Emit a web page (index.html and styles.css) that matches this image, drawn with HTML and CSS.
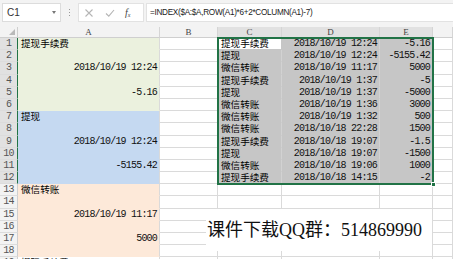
FILE: index.html
```html
<!DOCTYPE html>
<html lang="zh">
<head>
<meta charset="utf-8">
<link rel="stylesheet" href="styles.css">
</head>
<body>
<div class="app">
  <div class="toolbar">
    <div class="namebox"><span class="nb-text">C1</span><span class="nb-arrow"></span></div>
    <div class="grip"><i></i><i></i><i></i></div>
    <div class="fxbox">
      <svg class="ico" width="12" height="12" viewBox="0 0 12 12"><path d="M2.5 2.5 L9.5 9.5 M9.5 2.5 L2.5 9.5" stroke="#b5b5b5" stroke-width="1.1" fill="none"/></svg>
      <svg class="ico" width="12" height="12" viewBox="0 0 12 12"><path d="M2 6.5 L4.8 9.2 L10 3" stroke="#b5b5b5" stroke-width="1.1" fill="none"/></svg>
      <span class="fx">f<sub>x</sub></span>
    </div>
    <div class="formula">=INDEX($A:$A,ROW(A1)*6+2*COLUMN(A1)-7)</div>
  </div>
  <div class="sheet">
    <div class="grid">
      <div class="corner"><span class="tri"></span></div>
      <div class="ch">A</div><div class="ch">B</div><div class="ch hs">C</div><div class="ch hs">D</div><div class="ch hs">E</div><div class="ch"></div>

      <div class="rh hs">1</div><div class="c g zh">提现手续费</div><div class="c"></div><div class="c act zh">提现手续费</div><div class="c s r">2018/10/19 12:24</div><div class="c s r">-5.16</div><div class="c"></div>
      <div class="rh hs">2</div><div class="c g"></div><div class="c"></div><div class="c s zh">提现</div><div class="c s r">2018/10/19 12:24</div><div class="c s r">-5155.42</div><div class="c"></div>
      <div class="rh hs">3</div><div class="c g r">2018/10/19 12:24</div><div class="c"></div><div class="c s zh">微信转账</div><div class="c s r">2018/10/19 11:17</div><div class="c s r">5000</div><div class="c"></div>
      <div class="rh hs">4</div><div class="c g"></div><div class="c"></div><div class="c s zh">提现手续费</div><div class="c s r">2018/10/19 1:37</div><div class="c s r">-5</div><div class="c"></div>
      <div class="rh hs">5</div><div class="c g r">-5.16</div><div class="c"></div><div class="c s zh">提现</div><div class="c s r">2018/10/19 1:37</div><div class="c s r">-5000</div><div class="c"></div>
      <div class="rh hs">6</div><div class="c g"></div><div class="c"></div><div class="c s zh">微信转账</div><div class="c s r">2018/10/19 1:36</div><div class="c s r">3000</div><div class="c"></div>
      <div class="rh hs">7</div><div class="c b zh">提现</div><div class="c"></div><div class="c s zh">微信转账</div><div class="c s r">2018/10/19 1:32</div><div class="c s r">500</div><div class="c"></div>
      <div class="rh hs">8</div><div class="c b"></div><div class="c"></div><div class="c s zh">微信转账</div><div class="c s r">2018/10/18 22:28</div><div class="c s r">1500</div><div class="c"></div>
      <div class="rh hs">9</div><div class="c b r">2018/10/19 12:24</div><div class="c"></div><div class="c s zh">提现手续费</div><div class="c s r">2018/10/18 19:07</div><div class="c s r">-1.5</div><div class="c"></div>
      <div class="rh hs">10</div><div class="c b"></div><div class="c"></div><div class="c s zh">提现</div><div class="c s r">2018/10/18 19:07</div><div class="c s r">-1500</div><div class="c"></div>
      <div class="rh hs">11</div><div class="c b r">-5155.42</div><div class="c"></div><div class="c s zh">微信转账</div><div class="c s r">2018/10/18 19:06</div><div class="c s r">1000</div><div class="c"></div>
      <div class="rh hs">12</div><div class="c b"></div><div class="c"></div><div class="c s zh">提现手续费</div><div class="c s r">2018/10/18 14:15</div><div class="c s r">-2</div><div class="c"></div>
      <div class="rh">13</div><div class="c p zh">微信转账</div><div class="c"></div><div class="c"></div><div class="c"></div><div class="c"></div><div class="c"></div>
      <div class="rh">14</div><div class="c p"></div><div class="c"></div><div class="c"></div><div class="c"></div><div class="c"></div><div class="c"></div>
      <div class="rh">15</div><div class="c p r">2018/10/19 11:17</div><div class="c"></div><div class="c"></div><div class="c"></div><div class="c"></div><div class="c"></div>
      <div class="rh">16</div><div class="c p"></div><div class="c"></div><div class="c"></div><div class="c"></div><div class="c"></div><div class="c"></div>
      <div class="rh">17</div><div class="c p r">5000</div><div class="c"></div><div class="c"></div><div class="c"></div><div class="c"></div><div class="c"></div>
      <div class="rh">18</div><div class="c p"></div><div class="c"></div><div class="c"></div><div class="c"></div><div class="c"></div><div class="c"></div>
      <div class="rh">19</div><div class="c zh">提现手续费</div><div class="c"></div><div class="c"></div><div class="c"></div><div class="c"></div><div class="c"></div>
    </div>
    <div class="selection"><span class="handle"></span></div>
    <div class="textbox">课件下载QQ群：514869990</div>
  </div>
</div>
</body>
</html>
```
FILE: styles.css
```css
* { box-sizing: border-box; }
html, body { margin: 0; padding: 0; }
body { width: 453px; height: 259px; overflow: hidden; background: #fff; font-family: "Liberation Sans", Arial, sans-serif; }
.app { width: 453px; height: 259px; overflow: hidden; }

.toolbar { height: 27px; background: #f3f3f3; display: flex; align-items: flex-start; padding-top: 3px; }
.namebox { margin-left: 2px; width: 59px; height: 19px; background: #fff; border: 1px solid #dcdcdc; display: flex; align-items: center; justify-content: space-between; padding: 0 4px 0 4px; }
.nb-text { font-size: 10px; color: #333; }
.nb-arrow { width: 0; height: 0; border-left: 2.5px solid transparent; border-right: 2.5px solid transparent; border-top: 3px solid #777; }
.grip { width: 17px; height: 19px; display: flex; flex-direction: column; align-items: center; justify-content: center; gap: 2px; }
.grip i { width: 1px; height: 1px; background: #999; display: block; }
.fxbox { width: 66px; height: 19px; background: #fff; border: 1px solid #e2e2e2; display: flex; align-items: center; padding-left: 4px; gap: 9px; }
.ico { display: block; }
.fx { font-family: "Liberation Serif", serif; font-style: italic; font-size: 10px; color: #444; }
.fx sub { font-size: 6px; vertical-align: -1px; }
.formula { margin-left: 2px; flex: 1; height: 19px; background: #fff; border: 1px solid #e2e2e2; border-right: 0; font-size: 8.2px; letter-spacing: -0.3px; color: #222; line-height: 17px; padding-left: 3px; white-space: nowrap; }

.sheet { position: relative; }
.grid { display: grid; grid-template-columns: 18px 142px 58px 64px 98px 53px 20px; grid-template-rows: 11px; grid-auto-rows: 12.2px; }
.corner { background: #f3f3f3; border-right: 1px solid #cfcfcf; border-bottom: 1px solid #cfcfcf; position: relative; }
.tri { position: absolute; right: 2px; bottom: 2px; width: 0; height: 0; border-left: 6px solid transparent; border-bottom: 6px solid #b9b9b9; }
.ch { background: #f3f3f3; border-right: 1px solid #d5d5d5; border-bottom: 1px solid #cfcfcf; font-family: "Liberation Serif", serif; font-size: 9px; line-height: 10px; text-align: center; color: #444; }
.ch.hs { background: #e1e1e1; border-bottom: 1px solid #217346; }
.rh { background: #f3f3f3; border-right: 1px solid #cfcfcf; border-bottom: 1px solid #dcdcdc; font-family: "Liberation Mono", monospace; font-size: 10px; letter-spacing: -0.8px; line-height: 11px; text-align: center; color: #555; }
.rh.hs { background: #e1e1e1; border-right: 1px solid #217346; }

.c { border-right: 1px solid #dadada; border-bottom: 1px solid #dadada; font-family: "Liberation Mono", monospace; font-size: 10px; letter-spacing: -0.8px; line-height: 11px; color: #111; padding: 0 2px 0 3px; white-space: nowrap; }
.c.zh { font-family: "Noto Sans CJK SC", sans-serif; font-size: 9.6px; letter-spacing: 0; line-height: 11px; color: #000; }
.c.r { text-align: right; }
.c.g { background: #ebf1de; border-color: #ebf1de; border-right-color: #dadada; }
.c.b { background: #c5d9f1; border-color: #c5d9f1; border-right-color: #dadada; }
.c.p { background: #fde9d9; border-color: #fde9d9; border-right-color: #dadada; }
.c.s { background: #c6c6c6; border-bottom-color: #c6c6c6; border-right-color: #d2d2d2; }
.c.act { background: #fff; border-bottom-color: #c6c6c6; border-right-color: #c6c6c6; }

.selection { position: absolute; left: 217px; top: 10px; width: 217px; height: 148px; border: 2px solid #217346; pointer-events: none; }
.handle { position: absolute; right: -4px; bottom: -4px; width: 5px; height: 5px; background: #217346; border: 1px solid #fff; }

.textbox { position: absolute; left: 206px; top: 182px; width: 226px; height: 42px; background: #fff; font-family: "Liberation Serif", "Noto Sans CJK SC", serif; font-size: 18px; line-height: 42px; color: #111; padding-left: 1px; white-space: nowrap; }
```
